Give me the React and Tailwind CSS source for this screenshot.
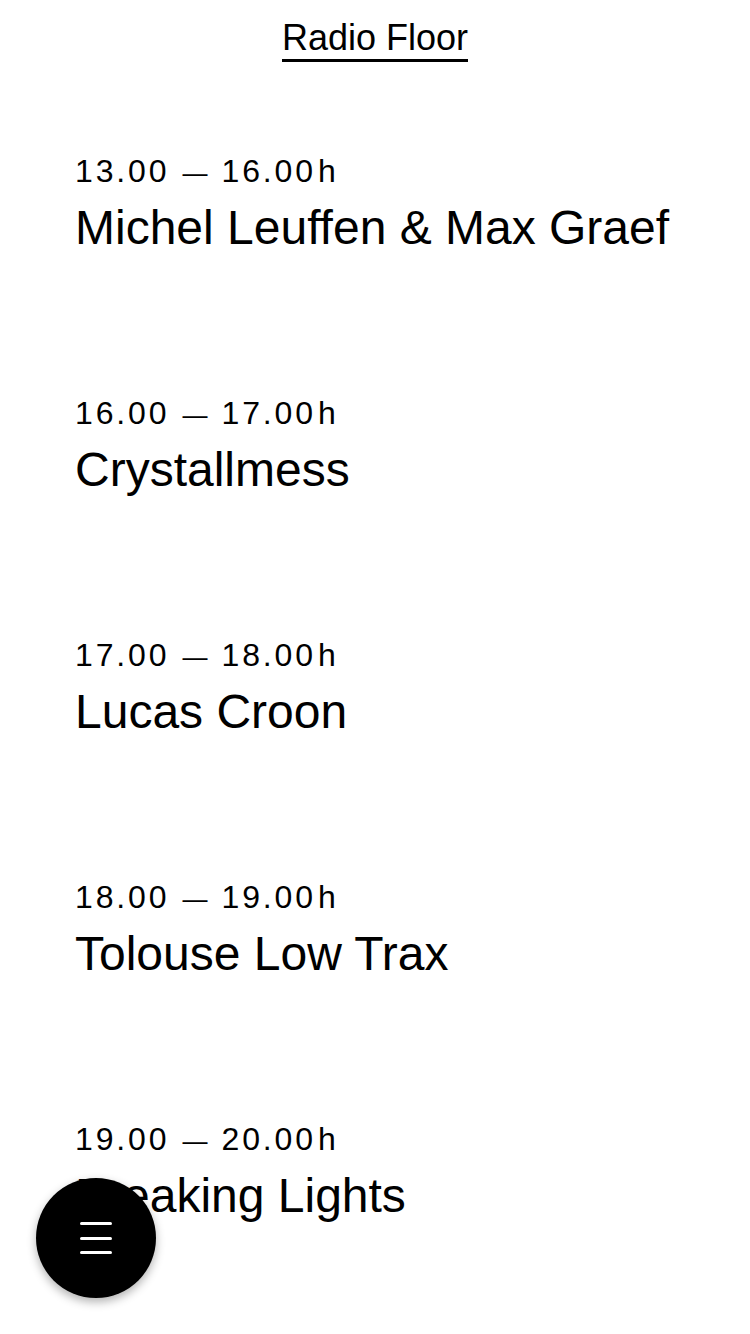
import React from "react";

const slots = [
  { from: "13.00", to: "16.00", name: "Michel Leuffen & Max Graef" },
  { from: "16.00", to: "17.00", name: "Crystallmess" },
  { from: "17.00", to: "18.00", name: "Lucas Croon" },
  { from: "18.00", to: "19.00", name: "Tolouse Low Trax" },
  { from: "19.00", to: "20.00", name: "Breaking Lights" },
];

function MenuButton() {
  return (
    <button className="fixed bottom-[36px] left-[36px] flex h-[120px] w-[120px] items-center justify-center rounded-full bg-black shadow-[0_4px_10px_rgba(0,0,0,0.3)]">
      <span className="flex w-[32px] flex-col gap-[11.5px]">
        <span className="block h-[3px] rounded-full bg-white" />
        <span className="block h-[3px] rounded-full bg-white" />
        <span className="block h-[3px] rounded-full bg-white" />
      </span>
    </button>
  );
}

function TimeRange({ from, to }) {
  return (
    <div className="flex h-[38px] items-baseline text-[32px] leading-[36px]">
      <span className="tracking-[0.09em]">{from}</span>
      <span className="ml-[13px] text-[25px] leading-[30px]">—</span>
      <span className="ml-[14px] tracking-[0.09em]">{to}</span>
      <span className="ml-[2px]">h</span>
    </div>
  );
}

export default function App() {
  return (
    <div
      className="min-h-[1334px] w-[750px] bg-white text-black"
      style={{ fontFamily: '"Liberation Sans", Arial, sans-serif' }}
    >
      <header className="flex justify-center pt-[18px]">
        <h1 className="border-b-[3px] border-black pb-[1px] text-[36px] leading-[40px]">Radio Floor</h1>
      </header>

      <ul className="mt-[91px] flex flex-col gap-[139px] pl-[75px]">
        {slots.map((slot) => (
          <li key={slot.from}>
            <TimeRange from={slot.from} to={slot.to} />
            <div className="mt-[9px] text-[48px] leading-[56px]">{slot.name}</div>
          </li>
        ))}
      </ul>

      <MenuButton />
    </div>
  );
}
